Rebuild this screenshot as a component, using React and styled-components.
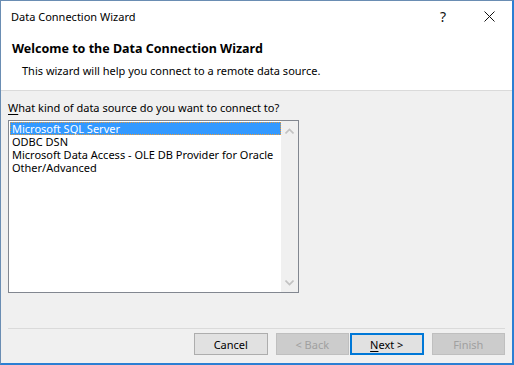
import React from "react";
import styled, { createGlobalStyle } from "styled-components";

const GlobalStyle = createGlobalStyle`
  html, body {
    margin: 0;
    padding: 0;
    background: #ffffff;
  }
  body {
    font-family: "Noto Sans", "Liberation Sans", sans-serif;
    font-size: 11px;
    color: #000;
  }
`;

const Window = styled.div`
  box-sizing: border-box;
  width: 514px;
  height: 365px;
  display: flex;
  flex-direction: column;
  border-top: 1px solid #6a8db3;
  border-left: 1px solid #6a8db3;
  border-right: 2px solid #2b7fd3;
  border-bottom: 2px solid #2b7fd3;
  background: #f0f0f0;
`;

const TitleBar = styled.div`
  height: 31px;
  display: flex;
  align-items: center;
  background: #fff;
  padding-left: 10px;
`;

const TitleText = styled.div`
  flex: 1;
  font-size: 11px;
  color: #000;
`;

const TitleButton = styled.div`
  width: ${(p) => p.$w || 46}px;
  height: 31px;
  display: flex;
  align-items: center;
  justify-content: center;
  font-size: 14px;
  color: #111;
`;

const Header = styled.div`
  background: #fff;
  height: 58px;
  border-bottom: 1px solid #dadada;
  padding-left: 11px;
  display: flex;
  flex-direction: column;
`;

const Heading = styled.div`
  font-weight: 700;
  font-size: 12.5px;
  margin-top: 8px;
  line-height: 18px;
`;

const Subheading = styled.div`
  margin-top: 5px;
  padding-left: 10px;
  line-height: 16px;
`;

const Body = styled.div`
  flex: 1;
  padding: 9px 7px 0 7px;
  display: flex;
  flex-direction: column;
`;

const Label = styled.div`
  line-height: 16px;
  margin-bottom: 4px;
  u {
    text-decoration: underline;
    text-underline-offset: 2px;
  }
`;

const ListBox = styled.div`
  box-sizing: border-box;
  width: 291px;
  height: 173px;
  border: 1px solid #828790;
  background: #fff;
  display: flex;
  padding: 1px 0 0 1px;
`;

const Items = styled.div`
  flex: 1;
`;

const Item = styled.div`
  height: 13px;
  line-height: 13px;
  padding-left: 2px;
  white-space: nowrap;
  background: ${(p) => (p.$selected ? "#3399ff" : "transparent")};
  color: ${(p) => (p.$selected ? "#fff" : "#000")};
  outline: ${(p) => (p.$selected ? "1px dotted #e59a3c" : "none")};
  outline-offset: -1px;
`;

const ScrollBar = styled.div`
  width: 17px;
  margin-top: -1px;
  background: #f0f0f0;
  display: flex;
  flex-direction: column;
  justify-content: space-between;
  align-items: center;
  padding: 7px 0 6px;
`;

const Footer = styled.div`
  margin-top: auto;
  border-top: 1px solid #dadada;
  padding: 4px 0 8px 186px;
  display: flex;
  gap: 8px;
`;

const Button = styled.div`
  box-sizing: border-box;
  width: 74px;
  height: 22px;
  display: flex;
  align-items: center;
  justify-content: center;
  background: ${(p) => (p.$disabled ? "#cccccc" : "#e1e1e1")};
  border: ${(p) =>
    p.$default ? "2px solid #0078d7" : p.$disabled ? "1px solid #bfbfbf" : "1px solid #adadad"};
  color: ${(p) => (p.$disabled ? "#a0a0a0" : "#000")};
  margin-left: ${(p) => (p.$tight ? "-7px" : "0")};
  u {
    text-underline-offset: 2px;
  }
`;

const Chevron = ({ up }) => (
  <svg width="9" height="6" viewBox="0 0 9 6">
    <path
      d={up ? "M0.5 5.5 L4.5 1.5 L8.5 5.5" : "M0.5 0.5 L4.5 4.5 L8.5 0.5"}
      fill="none"
      stroke="#c2c2c2"
      strokeWidth="1.6"
    />
  </svg>
);

const CloseIcon = () => (
  <svg width="11" height="11" viewBox="0 0 11 11">
    <path d="M0.5 0.5 L10.5 10.5 M10.5 0.5 L0.5 10.5" stroke="#111" strokeWidth="1" />
  </svg>
);

const sources = [
  "Microsoft SQL Server",
  "ODBC DSN",
  "Microsoft Data Access - OLE DB Provider for Oracle",
  "Other/Advanced",
];

export default function App() {
  return (
    <>
      <GlobalStyle />
      <Window>
        <TitleBar>
          <TitleText>Data Connection Wizard</TitleText>
          <TitleButton $w={46}>?</TitleButton>
          <TitleButton $w={46}>
            <CloseIcon />
          </TitleButton>
        </TitleBar>
        <Header>
          <Heading>Welcome to the Data Connection Wizard</Heading>
          <Subheading>This wizard will help you connect to a remote data source.</Subheading>
        </Header>
        <Body>
          <Label>
            <u>W</u>hat kind of data source do you want to connect to?
          </Label>
          <ListBox>
            <Items>
              {sources.map((s, i) => (
                <Item key={s} $selected={i === 0}>
                  {s}
                </Item>
              ))}
            </Items>
            <ScrollBar>
              <Chevron up />
              <Chevron />
            </ScrollBar>
          </ListBox>
          <Footer>
            <Button>Cancel</Button>
            <Button $disabled>&lt; Back</Button>
            <Button $default $tight>
              <span>
                <u>N</u>ext &gt;
              </span>
            </Button>
            <Button $disabled>Finish</Button>
          </Footer>
        </Body>
      </Window>
    </>
  );
}
